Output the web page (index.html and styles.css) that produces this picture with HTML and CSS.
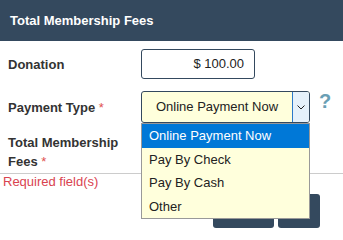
FILE: index.html
```html
<!DOCTYPE html>
<html lang="en">
<head>
<meta charset="utf-8">
<title>Total Membership Fees</title>
<link rel="stylesheet" href="styles.css">
</head>
<body>
<header class="panel-head">Total Membership Fees</header>
<div class="form">
  <div class="row">
    <div class="label">Donation</div>
    <div class="ctrl"><div class="money">$ 100.00</div></div>
  </div>
  <div class="row">
    <div class="label">Payment Type <span class="req">*</span></div>
    <div class="ctrl">
      <div class="select-wrap">
        <div class="select">
          <span class="sel-text">Online Payment Now</span>
          <span class="arrow"><svg width="8" height="5" viewBox="0 0 8 5"><polyline points="0.5,0.5 4,4 7.5,0.5" fill="none" stroke="#222" stroke-width="1"/></svg></span>
        </div>
        <ul class="options">
          <li class="active">Online Payment Now</li>
          <li>Pay By Check</li>
          <li>Pay By Cash</li>
          <li>Other</li>
        </ul>
      </div>
      <span class="help">?</span>
    </div>
  </div>
  <div class="row fees">
    <div class="label">Total Membership<br>Fees <span class="req">*</span></div>
    <div class="ctrl"></div>
  </div>
</div>
<hr class="sep">
<p class="required">Required field(s)</p>
<div class="actions">
  <button class="btn btn-wide" aria-label="Back"></button>
  <button class="btn btn-narrow" aria-label="Next"></button>
</div>
</body>
</html>
```
FILE: styles.css
```css
html, body {
  margin: 0;
  padding: 0;
}
body {
  width: 343px;
  height: 234px;
  overflow: hidden;
  background: #fff;
  color: #333;
  font-family: "Liberation Sans", Arial, sans-serif;
  font-size: 13px;
}
.panel-head {
  height: 41px;
  line-height: 41px;
  padding-left: 10px;
  background: #34495e;
  color: #fff;
  font-weight: bold;
  font-size: 13px;
}
.form {
  padding: 8px 0 0 8px;
}
.row {
  display: flex;
  align-items: center;
}
.row + .row {
  margin-top: 12px;
}
.row.fees {
  margin-top: 10px;
}
.label {
  width: 133px;
  flex: none;
  font-weight: bold;
  line-height: 19px;
}
.req {
  color: #e0504f;
  font-weight: normal;
}
.ctrl {
  display: flex;
  align-items: flex-start;
}
.money {
  width: 114px;
  height: 30px;
  box-sizing: border-box;
  border: 1px solid #34495e;
  border-radius: 3px;
  text-align: right;
  padding-right: 10px;
  line-height: 28px;
  color: #222;
}
.select-wrap {
  position: relative;
}
.select {
  width: 169px;
  height: 32px;
  box-sizing: border-box;
  border: 1px solid #34495e;
  border-radius: 3px;
  background: #ffffdc;
  display: flex;
  overflow: hidden;
  color: #222;
}
.sel-text {
  flex: 1;
  text-align: center;
  line-height: 30px;
}
.arrow {
  width: 18px;
  box-sizing: border-box;
  margin: -1px -1px -1px 0;
  border: 1px solid #2b79c9;
  background: #e5f1fb;
  display: flex;
  align-items: center;
  justify-content: center;
}
.options {
  position: absolute;
  left: 0;
  top: 32px;
  z-index: 2;
  width: 169px;
  box-sizing: border-box;
  margin: 0;
  padding: 0;
  list-style: none;
  border: 1px solid #999;
  background: #ffffdc;
  color: #222;
}
.options li {
  height: 23.5px;
  line-height: 23.5px;
  padding-left: 7px;
}
.options li.active {
  background: #0078d7;
  color: #fff;
}
.help {
  margin-left: 9px;
  font-size: 20px;
  line-height: 20px;
  font-weight: bold;
  color: #6a9fb5;
}
.sep {
  border: 0;
  border-top: 1px solid #ccc;
  margin: 2px 0 0;
  height: 0;
}
.required {
  margin: 0;
  padding-left: 3px;
  line-height: 15px;
  color: #d9434f;
}
.actions {
  display: flex;
  justify-content: flex-end;
  gap: 4px;
  padding-right: 23px;
  margin-top: 5px;
}
.btn {
  height: 34px;
  border: 0;
  border-radius: 3px;
  background: #34495e;
  padding: 0;
}
.btn-wide {
  width: 61px;
}
.btn-narrow {
  width: 42px;
}
```
